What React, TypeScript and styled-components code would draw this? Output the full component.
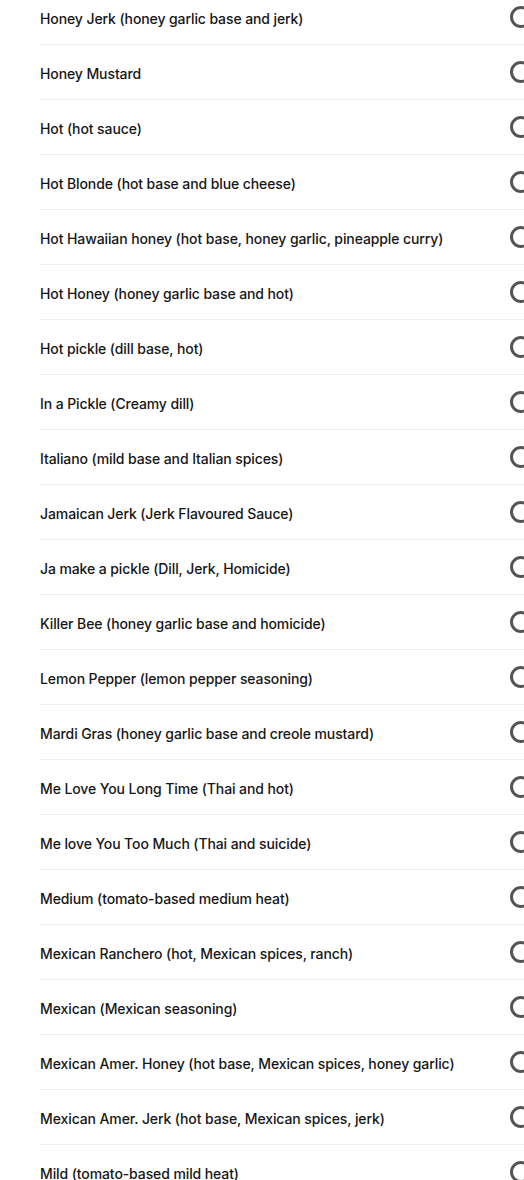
import React from 'react';
import styled, { createGlobalStyle } from 'styled-components';

const sauces = [
  'Honey Jerk (honey garlic base and jerk)',
  'Honey Mustard',
  'Hot (hot sauce)',
  'Hot Blonde (hot base and blue cheese)',
  'Hot Hawaiian honey (hot base, honey garlic, pineapple curry)',
  'Hot Honey (honey garlic base and hot)',
  'Hot pickle (dill base, hot)',
  'In a Pickle (Creamy dill)',
  'Italiano (mild base and Italian spices)',
  'Jamaican Jerk (Jerk Flavoured Sauce)',
  'Ja make a pickle (Dill, Jerk, Homicide)',
  'Killer Bee (honey garlic base and homicide)',
  'Lemon Pepper (lemon pepper seasoning)',
  'Mardi Gras (honey garlic base and creole mustard)',
  'Me Love You Long Time (Thai and hot)',
  'Me love You Too Much (Thai and suicide)',
  'Medium (tomato-based medium heat)',
  'Mexican Ranchero (hot, Mexican spices, ranch)',
  'Mexican (Mexican seasoning)',
  'Mexican Amer. Honey (hot base, Mexican spices, honey garlic)',
  'Mexican Amer. Jerk (hot base, Mexican spices, jerk)',
  'Mild (tomato-based mild heat)',
];

const GlobalStyle = createGlobalStyle`
  html, body {
    margin: 0;
    padding: 0;
    background: #ffffff;
    overflow: hidden;
  }
  body {
    font-family: Inter, "Open Sans", "Liberation Sans", sans-serif;
    color: #161616;
  }
`;

const OptionList = styled.div`
  margin-top: -10px;
  padding-left: 40px;
  width: 492px;
`;

const OptionRow = styled.label`
  display: flex;
  align-items: center;
  justify-content: space-between;
  height: 54px;
  border-bottom: 1px solid #efefef;
  cursor: pointer;
`;

const OptionName = styled.span`
  font-size: 14px;
  font-weight: 500;
  letter-spacing: -0.1px;
  line-height: 20px;
  padding-top: 3px;
`;

const Radio = styled.span`
  flex: none;
  width: 16px;
  height: 16px;
  border-radius: 50%;
  border: 3px solid #545454;
  margin-top: -1px;
`;

export default function App() {
  return (
    <>
      <GlobalStyle />
      <OptionList>
        {sauces.map((name) => (
          <OptionRow key={name}>
            <OptionName>{name}</OptionName>
            <Radio />
          </OptionRow>
        ))}
      </OptionList>
    </>
  );
}
